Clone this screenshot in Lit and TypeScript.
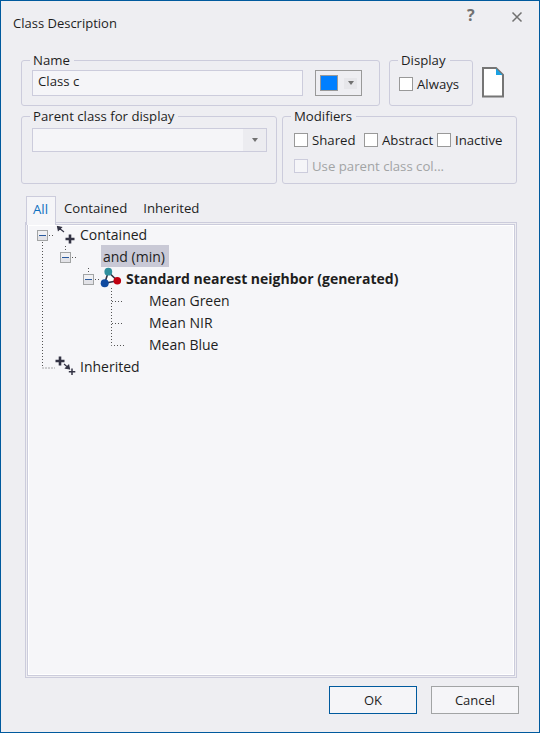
import { LitElement, html, css, svg } from "lit";
import { customElement } from "lit/decorators.js";

@customElement("app-root")
export class AppRoot extends LitElement {
  static styles = css`
    :host {
      display: block;
      width: 540px;
      height: 733px;
      font-family: "Open Sans", "Noto Sans", sans-serif;
      font-size: 13.2px;
      color: #1e1e1e;
    }
    * {
      box-sizing: border-box;
    }
    .window {
      width: 540px;
      height: 733px;
      background: #eeeef2;
      border: 1px solid #005a9e;
      display: flex;
      flex-direction: column;
    }
    .titlebar {
      height: 59px;
      padding: 12px 14px 0 12px;
      display: flex;
      align-items: flex-start;
      line-height: 20px;
      font-size: 13px;
    }
    .title {
      flex: 1;
    }
    .help {
      font-weight: 700;
      font-size: 16px;
      line-height: 18px;
      margin-top: -7px;
      margin-left: 1px;
      color: #717171;
      width: 44px;
    }
    .close {
      margin-top: -2px;
      margin-right: 2px;
    }
    .row {
      display: flex;
      padding-left: 20px;
    }
    .row1 {
      height: 46px;
      gap: 9px;
    }
    .row2 {
      height: 68px;
      gap: 5px;
      margin-top: 10px;
    }
    .group {
      position: relative;
      border: 1px solid #ccccdc;
      border-radius: 3px;
    }
    .legend {
      position: absolute;
      left: 8px;
      top: -10px;
      padding: 0 4px 0 3px;
      line-height: 18px;
      background: #eeeef2;
    }
    .name-group {
      width: 359px;
      display: flex;
      gap: 12px;
      padding: 9px 0 0 10px;
    }
    .input {
      width: 271px;
      height: 26px;
      background: #f5f5f8;
      border: 1px solid #ccccdc;
      padding-left: 5px;
      line-height: 21px;
    }
    .color-btn {
      width: 47px;
      height: 26px;
      border: 1px solid #999;
      display: flex;
      align-items: center;
      padding-left: 4px;
      gap: 6px;
    }
    .swatch {
      width: 18px;
      height: 16px;
      background: #007fff;
      border: 1px solid #999;
    }
    .drop {
      width: 13px;
      height: 11px;
      background: #e6e6ea;
      display: flex;
      align-items: center;
      justify-content: center;
    }
    .arrow {
      width: 0;
      height: 0;
      border-left: 3.5px solid transparent;
      border-right: 3.5px solid transparent;
      border-top: 4px solid #717171;
    }
    .display-group {
      width: 84px;
      padding: 16px 0 0 9px;
    }
    .check {
      display: flex;
      align-items: center;
      gap: 4px;
      line-height: 14px;
      white-space: nowrap;
    }
    .box {
      width: 14px;
      height: 14px;
      background: #fff;
      border: 1px solid #999;
      flex: none;
    }
    .check.off {
      color: #a2a4a5;
    }
    .check.off .box {
      border-color: #ccccdc;
      background: #f5f5f8;
    }
    .doc {
      margin-top: 7px;
    }
    .parent-group {
      width: 256px;
      padding: 11px 0 0 10px;
    }
    .combo {
      width: 235px;
      height: 24px;
      background: #f5f5f8;
      border: 1px solid #ccccdc;
      display: flex;
      justify-content: flex-end;
    }
    .combo .drop {
      width: 23px;
      height: 22px;
      background: #ececf0;
    }
    .modifiers-group {
      width: 235px;
      padding: 16px 0 0 11px;
    }
    .mod-line {
      display: flex;
    }
    .mod-line .check:nth-child(1) {
      width: 70px;
    }
    .mod-line .check:nth-child(2) {
      width: 73px;
    }
    .mod-use {
      margin-top: 12px;
    }
    .tabs {
      display: flex;
      align-items: flex-start;
      margin: 12px 0 0 25px;
      height: 26px;
      line-height: 24px;
      position: relative;
      z-index: 1;
    }
    .tab {
      padding: 0 8px;
    }
    .tab.active {
      width: 30px;
      height: 29px;
      padding: 0 0 0 6px;
      color: #0e70c0;
      background: #f5f5f8;
      border: 1px solid #ccccdc;
      border-bottom: none;
    }
    .panel {
      margin: 0 22px 0 24px;
      height: 456px;
      border: 1px solid #ccccdc;
      background: #f6f6f9;
      box-shadow:
        inset 0 0 0 1px #eeeef2,
        inset 0 0 0 2px #ccccdc,
        inset 0 0 0 3px #fff;
      position: relative;
    }
    .lines {
      position: absolute;
      left: -1px;
      top: -1px;
      pointer-events: none;
    }
    .tree {
      font-size: 14px;
      position: relative;
    }
    .tree-row {
      height: 22px;
      line-height: 24px;
      white-space: nowrap;
    }
    .l0 {
      padding-left: 54px;
    }
    .l1 {
      padding-left: 75px;
    }
    .l2 {
      padding-left: 100px;
      font-weight: 700;
    }
    .l3 {
      padding-left: 123px;
    }
    .selected {
      display: block;
      width: fit-content;
      height: 22px;
      background: #c9c9d6;
      padding: 0 4px 0 2px;
    }
    .footer {
      display: flex;
      justify-content: flex-end;
      gap: 14px;
      padding: 8px 20px 0 0;
    }
    .btn {
      width: 88px;
      height: 28px;
      background: #f5f5f8;
      border: 1px solid #a2a4a5;
      text-align: center;
      line-height: 25px;
      font-size: 13px;
      font-family: inherit;
      color: inherit;
      padding: 0;
    }
    .btn.default {
      border-color: #005a9e;
    }
  `;

  private minus(x: number, y: number) {
    return svg`
      <rect x=${x + 0.5} y=${y + 0.5} width="10" height="10" fill="#f0f0f3" stroke="#a2a4a5"/>
      <rect x=${x + 1} y=${y + 6} width="9" height="4" fill="#e2e2e7"/>
      <rect x=${x + 2} y=${y + 5} width="7" height="1" fill="#2a5a9e"/>`;
  }

  private lines() {
    const dotted = "M42.5 242V368H55M49 235.5H55M65.5 246V252M72 257.5H78M88.5 268V274M95 279.5H101M111.5 288V345.5H124M112 301.5H124M112 323.5H124";
    return svg`
      <svg class="lines" width="200" height="170" viewBox="25 222 200 170">
        <path d=${dotted} fill="none" stroke="#555" stroke-dasharray="1 2"/>
        ${this.minus(37, 230)}
        ${this.minus(60, 252)}
        ${this.minus(83, 274)}
        <!-- contained -->
        <path d="M59 228l5 4M57.500 226.500l4 .8-3.200 3.200z" fill="#333344" stroke="#333344" stroke-width="1.100"/>
        <path d="M70 234.500v9M65.500 239h9" stroke="#333344" stroke-width="2.600"/>
        <!-- network -->
        <path d="M108.300 272L117.300 280.700L104.700 283.300Z" fill="#fff" stroke="#333344" stroke-width="1.600"/>
        <circle cx="108.300" cy="271.700" r="3.900" fill="#2f8f9d"/>
        <circle cx="117.300" cy="280.700" r="3.800" fill="#c00010"/>
        <circle cx="104.700" cy="283.300" r="4" fill="#0f4aa0"/>
        <!-- inherited -->
        <path d="M60 356.500v9M55.500 361h9" stroke="#333344" stroke-width="2.600"/>
        <path d="M64 364l4 3.500M69.500 369l-4-.8 3.200-3.200z" fill="#333344" stroke="#333344" stroke-width="1.100"/>
        <path d="M72 368.500v6.500M68.800 371.800h6.500" stroke="#333344" stroke-width="1.500"/>
      </svg>`;
  }

  render() {
    return html`
      <div class="window">
        <div class="titlebar">
          <span class="title">Class Description</span>
          <span class="help">?</span>
          <svg class="close" width="12" height="12" viewBox="0 0 12 12">
            <path d="M1.500 1.500l9 9M10.500 1.500l-9 9" stroke="#717171" stroke-width="1.500"/>
          </svg>
        </div>

        <div class="row row1">
          <div class="group name-group">
            <span class="legend">Name</span>
            <div class="input">Class c</div>
            <div class="color-btn">
              <div class="swatch"></div>
              <div class="drop"><div class="arrow"></div></div>
            </div>
          </div>
          <div class="group display-group">
            <span class="legend">Display</span>
            <div class="check"><span class="box"></span>Always</div>
          </div>
          <svg class="doc" width="22" height="31" viewBox="0 0 22 31">
            <path d="M1 1H14L21 8V29.500H1Z" fill="#fff" stroke="#757575" stroke-width="2"/>
            <path d="M14 1.500L20.500 8H14Z" fill="#1ba1e2"/>
          </svg>
        </div>

        <div class="row row2">
          <div class="group parent-group">
            <span class="legend">Parent class for display</span>
            <div class="combo">
              <div class="drop"><div class="arrow"></div></div>
            </div>
          </div>
          <div class="group modifiers-group">
            <span class="legend">Modifiers</span>
            <div class="mod-line">
              <div class="check"><span class="box"></span>Shared</div>
              <div class="check"><span class="box"></span>Abstract</div>
              <div class="check"><span class="box"></span>Inactive</div>
            </div>
            <div class="check off mod-use"><span class="box"></span>Use parent class col...</div>
          </div>
        </div>

        <div class="tabs">
          <div class="tab active">All</div>
          <div class="tab">Contained</div>
          <div class="tab">Inherited</div>
        </div>

        <div class="panel">
          ${this.lines()}
          <div class="tree">
            <div class="tree-row l0">Contained</div>
            <div class="tree-row l1"><span class="selected">and (min)</span></div>
            <div class="tree-row l2">Standard nearest neighbor (generated)</div>
            <div class="tree-row l3">Mean Green</div>
            <div class="tree-row l3">Mean NIR</div>
            <div class="tree-row l3">Mean Blue</div>
            <div class="tree-row l0">Inherited</div>
          </div>
        </div>

        <div class="footer">
          <button class="btn default">OK</button>
          <button class="btn">Cancel</button>
        </div>
      </div>
    `;
  }
}
